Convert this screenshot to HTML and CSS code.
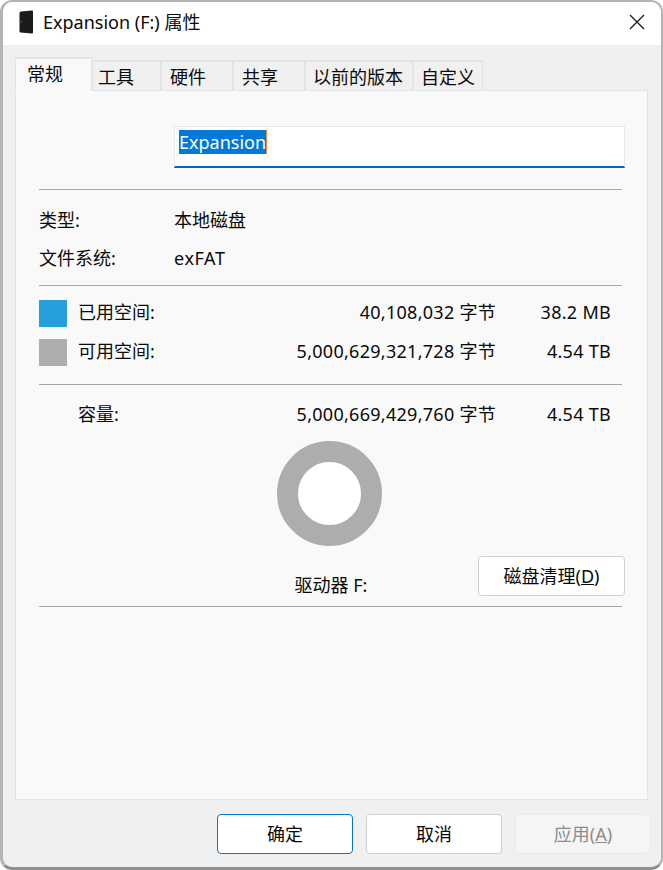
FILE: index.html
```html
<!DOCTYPE html>
<html lang="zh-CN">
<head>
<meta charset="utf-8">
<title>Expansion (F:) 属性</title>
<link rel="stylesheet" href="styles.css">
</head>
<body>
<div class="window">
  <header class="titlebar">
    <svg class="drive-icon" width="16" height="25" viewBox="0 0 16 25" aria-hidden="true">
      <path d="M3 1.5 L14 0.5 Q15 0.5 15 1.5 L15 22.5 Q15 23.5 14 23.5 L2.5 22.5 Q1.5 22.4 1.5 21.5 L1.5 3 Q1.5 1.7 3 1.5 Z" fill="#1b1b1b"/>
      <path d="M1.5 12 L4 11.7" stroke="#555" stroke-width="1"/>
    </svg>
    <span class="title">Expansion (F:) 属性</span>
    <svg class="close" width="16" height="16" viewBox="0 0 16 16" aria-hidden="true">
      <path d="M1 1 L15 15 M15 1 L1 15" stroke="#1a1a1a" stroke-width="1.3" fill="none"/>
    </svg>
  </header>
  <div class="body">
    <nav class="tabs">
      <div class="tab active w76">常规</div>
      <div class="tab tab-first w69">工具</div>
      <div class="tab w72">硬件</div>
      <div class="tab w72">共享</div>
      <div class="tab tab-tight w108">以前的版本</div>
      <div class="tab tab-tight w70">自定义</div>
    </nav>
    <main class="panel">
      <div class="name-row">
        <div class="name-input"><span class="selection">Expansion</span></div>
      </div>
      <hr class="sep sep-a">
      <div class="info-row row-type"><span class="info-label">类型:</span><span>本地磁盘</span></div>
      <div class="info-row row-fs"><span class="info-label">文件系统:</span><span class="wide">exFAT</span></div>
      <hr class="sep sep-b">
      <div class="space-row row-used">
        <span class="swatch used"></span><span class="cell">已用空间:</span><span class="cell num">40,108,032 字节</span><span class="cell num">38.2 MB</span>
      </div>
      <div class="space-row row-free">
        <span class="swatch free"></span><span class="cell">可用空间:</span><span class="cell num">5,000,629,321,728 字节</span><span class="cell num">4.54 TB</span>
      </div>
      <hr class="sep sep-c">
      <div class="space-row row-cap">
        <span></span><span class="cell">容量:</span><span class="cell num">5,000,669,429,760 字节</span><span class="cell num">4.54 TB</span>
      </div>
      <div class="donut-wrap"><div class="donut"></div></div>
      <div class="drive-row">
        <span class="drive-label">驱动器 F:</span>
        <button class="btn clean" type="button">磁盘清理(<u>D</u>)</button>
      </div>
      <hr class="sep sep-d">
    </main>
    <footer class="footer">
      <button class="btn action primary" type="button">确定</button>
      <button class="btn action" type="button">取消</button>
      <button class="btn action disabled" type="button">应用(<u>A</u>)</button>
    </footer>
  </div>
</div>
</body>
</html>
```

FILE: styles.css
```css
* { box-sizing: border-box; }
html, body { margin: 0; height: 100%; }
body {
  background: #fff;
  font-family: "Noto Sans", "Noto Sans CJK SC", sans-serif;
  font-size: 18px;
  color: #0a0a0a;
  overflow: hidden;
}
.window {
  width: 663px;
  height: 870px;
  display: flex;
  flex-direction: column;
  border: solid #b4b4b4;
  border-width: 2px 2px 3px 3px;
  border-bottom-color: #8f8f8f;
  border-radius: 12px;
  overflow: hidden;
  background: #f0f0f0;
}
.titlebar {
  height: 43px;
  flex: none;
  background: #fff;
  display: flex;
  align-items: center;
  padding: 0 16px 4px 15px;
}
.drive-icon { flex: none; margin-right: 9px; margin-top: 1px; }
.title { flex: 1; line-height: 24px; }
.close { flex: none; }
.body {
  flex: 1;
  display: flex;
  flex-direction: column;
  padding: 0 13px 0 12px;
}
.tabs {
  display: flex;
  align-items: flex-end;
  height: 46px;
  flex: none;
  position: relative;
  z-index: 1;
  margin-bottom: -1px;
}
.tab {
  height: 31px;
  border: 2px solid #e4e4e4;
  border-bottom: 1px solid #e4e4e4;
  border-left-width: 1px;
  border-right-width: 1px;
  background: #f0f0f0;
  line-height: 31px;
  padding-left: 8px;
  white-space: nowrap;
}
.tab-first { padding-left: 5px; }
.tab-tight { padding-left: 7px; }
.tab.active {
  height: 34px;
  background: #f9f9f9;
  border-bottom-color: #f9f9f9;
  padding-left: 11px;
}
.w76 { width: 77px; }
.w69 { width: 69px; }
.w72 { width: 72px; }
.w108 { width: 108px; }
.w70 { width: 70px; }
.panel {
  flex: none;
  height: 710px;
  background: #f9f9f9;
  border: 1px solid #e4e4e4;
  padding: 35px 22px 0 23px;
  display: flex;
  flex-direction: column;
}
.name-row { padding-left: 135px; }
.name-input {
  height: 42px;
  background: #fff;
  border: 1px solid #e8e8e8;
  border-bottom: 2px solid #0067c0;
  padding: 3px 0 0 4px;
  line-height: 24px;
}
.selection {
  display: inline-block;
  background: #0078d7;
  color: #fff;
  border-right: 1px solid #e8893a;
  height: 24px;
  line-height: 24px;
}
.sep {
  margin: 0 3px 0 0;
  height: 1px;
  border: 0;
  background: #a6a6a6;
  flex: none;
}
.sep-a { margin-top: 21px; }
.info-row {
  display: grid;
  grid-template-columns: 135px 1fr;
  line-height: 24px;
  height: 24px;
}
.wide { letter-spacing: 0.6px; }
.row-type { margin-top: 18px; }
.row-fs { margin-top: 14px; }
.sep-b { margin-top: 15px; }
.space-row {
  display: grid;
  grid-template-columns: 39px 1fr auto 115px;
  height: 27px;
  padding-right: 14px;
}
.cell { line-height: 25px; }
.row-used { margin-top: 14px; }
.row-free { margin-top: 12px; }
.swatch { display: block; width: 28px; height: 27px; }
.swatch.used { background: #26a0da; }
.swatch.free { background: #adadad; }
.num { text-align: right; white-space: nowrap; letter-spacing: 0.28px; }
.sep-c { margin-top: 18px; }
.row-cap { margin-top: 17px; }
.donut-wrap {
  display: flex;
  justify-content: center;
  margin-top: 12px;
  padding-right: 5px;
}
.donut {
  width: 105px;
  height: 105px;
  border-radius: 50%;
  border: 21px solid #adadad;
  background: #fff;
}
.drive-row {
  display: grid;
  grid-template-columns: 1fr auto 1fr;
  margin-top: 10px;
  height: 40px;
}
.drive-label {
  grid-column: 2;
  align-self: end;
  line-height: 24px;
  margin-bottom: -1px;
  padding-right: 2px;
  white-space: nowrap;
}
.btn {
  font: inherit;
  color: #0a0a0a;
  background: #fff;
  border: 1px solid #d0d0d0;
  border-radius: 4px;
  padding: 0;
  line-height: 24px;
}
.clean {
  grid-column: 3;
  justify-self: end;
  width: 147px;
  height: 40px;
}
.sep-d { margin-top: 10px; }
.footer {
  flex: 1;
  display: flex;
  justify-content: flex-end;
  align-items: flex-start;
  gap: 13px;
  padding: 14px 0 0;
  margin-right: -3px;
}
.action {
  width: 136px;
  height: 40px;
}
.primary { border-color: #0078d4; }
.btn.disabled { background: #f5f5f5; border-color: #ececec; color: #8c8c8c; }
```
